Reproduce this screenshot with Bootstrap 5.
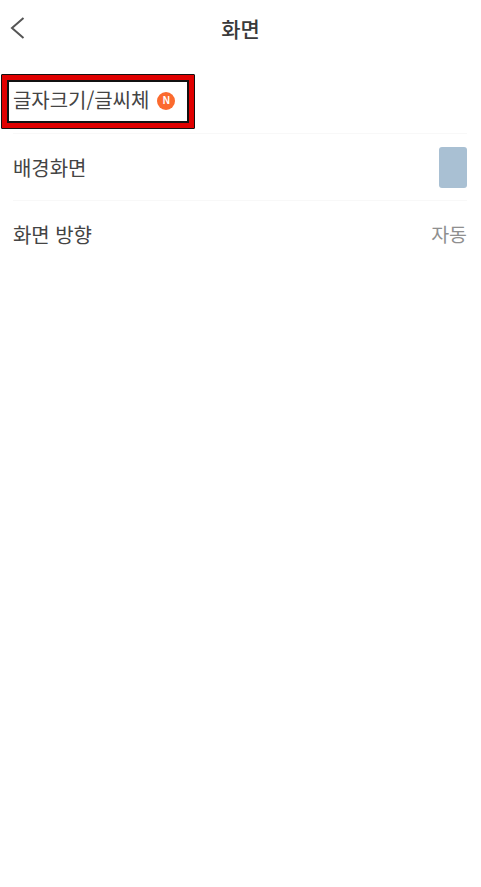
<!DOCTYPE html>
<html lang="ko">
<head>
<meta charset="utf-8">
<link href="https://cdn.jsdelivr.net/npm/bootstrap@5.3.0/dist/css/bootstrap.min.css" rel="stylesheet">
<style>
body { background:#fff; font-family:"Noto Sans CJK KR","Liberation Sans",sans-serif; color:#444; }
.app-bar { height:58px; position:relative; }
.back-btn { position:absolute; left:9px; top:15px; width:18px; height:26px; line-height:0; }
.bar-title { font-size:21px; font-weight:500; color:#3a3a3a; line-height:56px; }
.settings { padding:16px 14px 0 13px; }
.row-item { font-size:20px; line-height:28px; height:67px; border-bottom:1px solid #f8f8f8; letter-spacing:-.05px; }
.row-item:last-child { border-bottom:0; }
.row-shift > span:first-child { position:relative; top:1px; }
.first-row { height:60px; padding-top:0; }
.highlight { position:absolute; left:1px; top:74px; width:194px; height:55px; border:1px solid #111; background:#e00000; padding:5px; z-index:2; border-radius:1px; }
.highlight-in { display:block; width:100%; height:100%; background:#fff; border:2px solid #111; }
.highlight-wrap { position:absolute; left:13px; top:86px; z-index:3; font-size:20px; line-height:28px; color:#444; letter-spacing:-.05px; gap:8px; }
.new-dot { width:18px; height:18px; border-radius:50%; background:#fb6a2e; color:#fff; font-size:10px; font-weight:700; font-family:"Liberation Sans",sans-serif; position:relative; top:1px; }
.thumb { width:28px; height:41px; background:#a9c0d3; border-radius:3px; }
.val { color:#8f8f8f; font-size:19.5px; position:relative; top:-1px; }
</style>
</head>
<body>
<div class="app-bar text-center">
  <div class="back-btn"><svg width="18" height="26" viewBox="0 0 18 26"><path d="M14.5 3 3 13l11.5 10" fill="none" stroke="#555" stroke-width="2"/></svg></div>
  <div class="bar-title">화면</div>
</div>
<div class="highlight"><span class="highlight-in"></span></div>
<div class="highlight-wrap d-flex align-items-center"><span>글자크기/글씨체</span><span class="new-dot d-flex align-items-center justify-content-center">N</span></div>
<div class="settings">
  <div class="row-item first-row"></div>
  <div class="row-item row-shift d-flex align-items-center justify-content-between"><span>배경화면</span><span class="thumb"></span></div>
  <div class="row-item d-flex align-items-center justify-content-between"><span>화면 방향</span><span class="val">자동</span></div>
</div>
<script src="https://cdn.jsdelivr.net/npm/bootstrap@5.3.0/dist/js/bootstrap.bundle.min.js"></script>
</body>
</html>
